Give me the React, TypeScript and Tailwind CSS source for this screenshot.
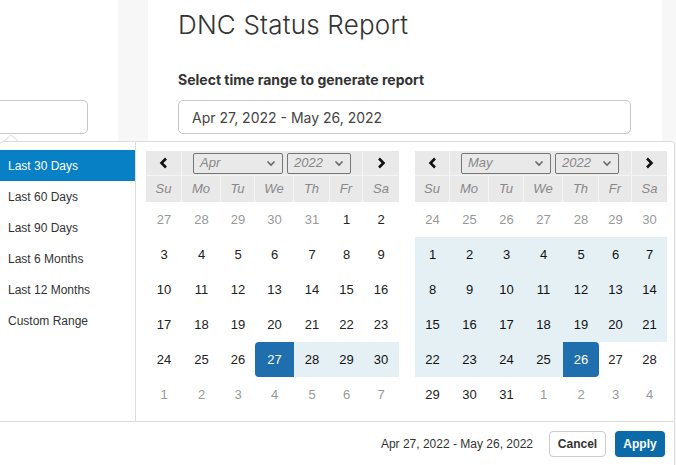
import React from 'react';

type Day = { n: number; off?: boolean; range?: boolean; start?: boolean; end?: boolean };

const leftCols = 'grid-cols-[36px_39px_34px_39px_36px_33px_36px]';
const rightCols = 'grid-cols-[35px_39px_35px_39px_36px_33px_35px]';

const weekdays = ['Su', 'Mo', 'Tu', 'We', 'Th', 'Fr', 'Sa'];

const april: Day[] = [
  ...[27, 28, 29, 30, 31].map((n) => ({ n, off: true })),
  ...Array.from({ length: 30 }, (_, i) => {
    const n = i + 1;
    return { n, start: n === 27, range: n > 27 };
  }),
  ...[1, 2, 3, 4, 5, 6, 7].map((n) => ({ n, off: true })),
];

const may: Day[] = [
  ...[24, 25, 26, 27, 28, 29, 30].map((n) => ({ n, off: true })),
  ...Array.from({ length: 31 }, (_, i) => {
    const n = i + 1;
    return { n, end: n === 26, range: n < 26 };
  }),
  ...[1, 2, 3, 4].map((n) => ({ n, off: true })),
];

const ranges = ['Last 30 Days', 'Last 60 Days', 'Last 90 Days', 'Last 6 Months', 'Last 12 Months', 'Custom Range'];

const Chevron = ({ dir }: { dir: 'left' | 'right' }) => (
  <svg width="9" height="12" viewBox="0 0 9 12" fill="none">
    <path
      d={dir === 'left' ? 'M7 1.5 L2.5 6 L7 10.5' : 'M2 1.5 L6.5 6 L2 10.5'}
      stroke="#111"
      strokeWidth="2.6"
    />
  </svg>
);

const FakeSelect = ({ label, width }: { label: string; width: string }) => (
  <div className={`${width} h-[21px] border border-[#767676] rounded-[2px] flex items-center justify-between pl-[6px] pr-[6px]`}>
    <span className="italic text-[13px] text-[#888]">{label}</span>
    <svg width="10" height="7" viewBox="0 0 10 7" fill="none">
      <path d="M1.5 1.5 L5 5 L8.5 1.5" stroke="#666" strokeWidth="1.6" />
    </svg>
  </div>
);

const Calendar = ({ cols, month, days }: { cols: string; month: string; days: Day[] }) => (
  <div>
    <div className={`grid ${cols} h-[25px] bg-[#e9e9e9] border-b border-[#f5f5f5]`}>
      <div className="flex items-center justify-center border-r border-[#f5f5f5]">
        <Chevron dir="left" />
      </div>
      <div className="col-span-5 flex items-center gap-[4px] pl-[11px] border-r border-[#f5f5f5]">
        <FakeSelect label={month} width="w-[90px]" />
        <FakeSelect label="2022" width="w-[64px]" />
      </div>
      <div className="flex items-center justify-center">
        <Chevron dir="right" />
      </div>
    </div>
    <div className={`grid ${cols} h-[26px] bg-[#e9e9e9]`}>
      {weekdays.map((w, i) => (
        <div
          key={w}
          className={`flex items-center justify-center italic text-[13px] text-[#888] ${i < 6 ? 'border-r border-[#f5f5f5]' : ''}`}
        >
          {w}
        </div>
      ))}
    </div>
    <div className={`grid ${cols} auto-rows-[35px]`}>
      {days.map((d, i) => {
        let cls = 'text-[#222]';
        if (d.off) cls = 'text-[#999]';
        else if (d.start) cls = 'bg-[#1f6fae] text-white rounded-l-[4px]';
        else if (d.end) cls = 'bg-[#1f6fae] text-white rounded-r-[4px]';
        else if (d.range) cls = 'bg-[#e5f0f5] text-[#111]';
        return (
          <div key={i} className={`flex items-center justify-center text-[13px] ${cls}`}>
            {d.n}
          </div>
        );
      })}
    </div>
  </div>
);

export default function App() {
  return (
    <div className="relative w-[676px] h-[465px] overflow-hidden bg-white font-['Liberation_Sans',Arial,sans-serif]">
      {/* page behind the picker */}
      <div className="flex h-full">
        <div className="w-[118px] bg-white">
          <div className="mt-[100px] -ml-[12px] w-[100px] h-[34px] border border-[#c8c8c8] rounded-[5px]" />
        </div>
        <div className="w-[30px] bg-[#f7f7f7]" />
        <div className="w-[514px] bg-white pl-[30px] font-['Inter',sans-serif]">
          <h1 className="mt-[9px] text-[26px] leading-[32px] font-light text-[#333] tracking-[0.2px]">DNC Status Report</h1>
          <div className="mt-[30px] text-[14px] leading-[18px] font-bold text-[#333]">Select time range to generate report</div>
          <div className="mt-[11px] w-[453px] h-[34px] border border-[#c8c8c8] rounded-[5px] flex items-center pl-[13px] text-[14px] text-[#444]">
            Apr 27, 2022 - May 26, 2022
          </div>
        </div>
        <div className="flex-1 bg-[#f7f7f7]" />
      </div>

      {/* caret of the picker */}
      <svg className="absolute left-[3px] top-[134px]" width="16" height="9" viewBox="0 0 16 9">
        <path d="M0 8 L8 0.8 L16 8" fill="white" stroke="#d8d8d8" strokeWidth="1" />
      </svg>

      {/* date range picker */}
      <div className="absolute left-[-1px] right-[1px] top-[141px] h-[340px] bg-white border border-[#ddd] rounded-[4px]">
        <div className="flex">
          <div className="w-[136px] border-r border-[#ddd] pt-[8px] h-[279px]">
            {ranges.map((r, i) => (
              <div
                key={r}
                className={`h-[31px] flex items-center pl-[8px] text-[12px] ${i === 0 ? 'bg-[#0880c5] text-white' : 'text-[#333]'}`}
              >
                {r}
              </div>
            ))}
          </div>
          <div className="flex pt-[9px] pl-[10px] gap-[16px]">
            <Calendar cols={leftCols} month="Apr" days={april} />
            <Calendar cols={rightCols} month="May" days={may} />
          </div>
        </div>
        <div className="border-t border-[#ddd] h-[44px] flex items-center justify-end pr-[9px] pt-[1px]">
          <span className="text-[12px] text-[#333] mr-[16px]">Apr 27, 2022 - May 26, 2022</span>
          <button className="w-[57px] h-[26px] border border-[#ccc] rounded-[4px] bg-white text-[12px] font-bold text-[#333] mr-[9px]">
            Cancel
          </button>
          <button className="w-[50px] h-[26px] rounded-[4px] bg-[#0b6aa8] text-[12px] font-bold text-white">Apply</button>
        </div>
      </div>
    </div>
  );
}
